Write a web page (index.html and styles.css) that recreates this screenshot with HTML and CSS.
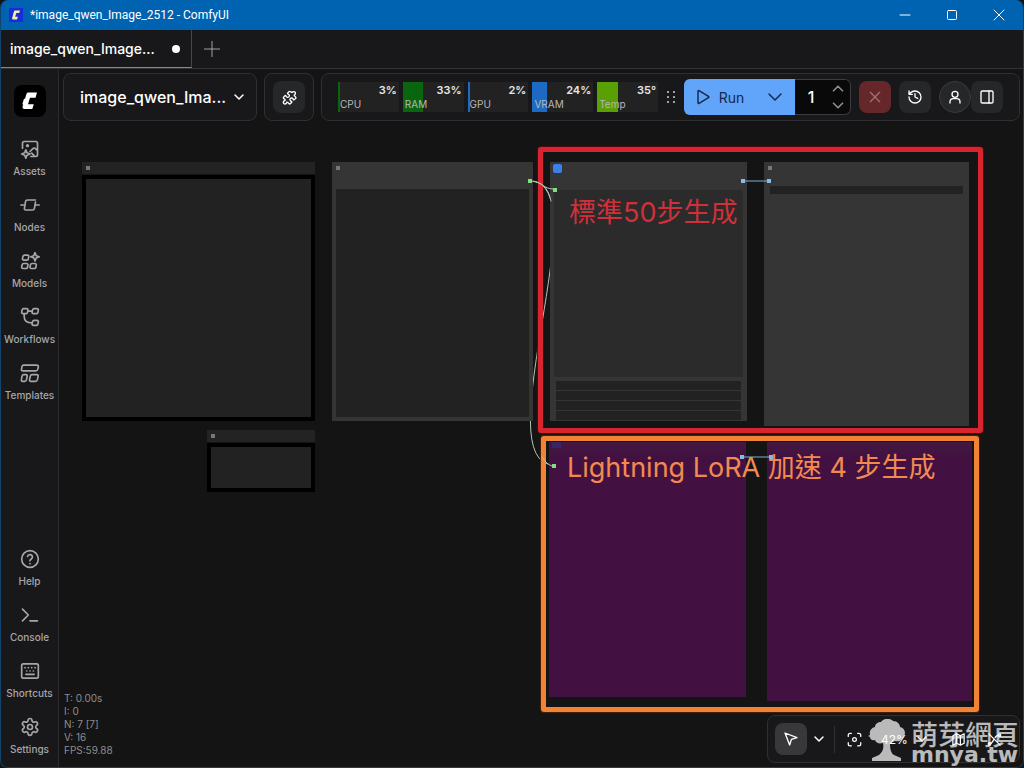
FILE: index.html
```html
<!DOCTYPE html>
<html lang="zh-Hant">

<head>
  <meta charset="UTF-8">
  <meta name="viewport" content="width=device-width, initial-scale=1.0">
  <title>*image_qwen_Image_2512 - ComfyUI</title>
  <link rel="stylesheet" href="styles.css">
</head>

<body>
  <div class="window">
    <header class="titlebar">
      <svg class="app-icon" viewBox="0 0 14 14"><rect width="14" height="14" fill="#1b2bd8"/><path d="M6 2.500h5l-.8 2.500H7.300L6.200 8.800h2.700L8 11.500H4.200C3 11.500 3 10.500 3.300 9.500L4.600 4.500C5 3.200 5.200 2.500 6 2.500z" fill="#eef3a0"/></svg>
      <span class="window-title">*image_qwen_Image_2512 - ComfyUI</span>
      <button class="win-btn" aria-label="Minimize"><svg viewBox="0 0 12 12"><path d="M1 6h10"/></svg></button>
      <button class="win-btn" aria-label="Maximize"><svg viewBox="0 0 12 12"><rect x="1.500" y="1.500" width="9" height="9" rx="1"/></svg></button>
      <button class="win-btn" aria-label="Close"><svg viewBox="0 0 12 12"><path d="M1 1l10 10M11 1L1 11"/></svg></button>
    </header>

    <div class="tabs">
      <button class="tab"><span>image_qwen_Image...</span><i class="dot"></i></button>
      <button class="tab-add" aria-label="New workflow"><svg viewBox="0 0 16 16"><path d="M8 0v16M0 8h16"/></svg></button>
    </div>

    <div class="body">
      <nav class="sidebar">
        <svg class="logo" viewBox="0 0 32 32"><rect width="32" height="32" rx="8" fill="#000"/><path d="M14.500 7.500h8.500l-1.500 5.200h-5.500l-2 6.600h5.800L18.300 24H10.600c-2 0-2.400-1.400-1.900-3l.5-1.700H8.300l1.700-5.600h1l1.300-4.300c.4-1.300 1-1.900 2.200-1.900z" fill="#fff"/></svg>
        <button class="side-item">
          <svg class="icon" viewBox="0 0 24 24"><path d="M3 11V5a2 2 0 0 1 2-2h14a2 2 0 0 1 2 2v14a2 2 0 0 1-2 2h-6M21 14l-2.500-2.500a2 2 0 0 0-3 0L12 15M17 20l-3-3M7 13l1.400 3.600L12 18l-3.600 1.400L7 23l-1.400-3.600L2 18l3.600-1.400z"/><circle cx="9" cy="8" r="1"/></svg>
          <span>Assets</span>
        </button>
        <button class="side-item">
          <svg class="icon" viewBox="0 0 24 24"><path d="M1 12h5M18 12h5M18.500 6H9C7.500 6 6.800 6.700 6.600 8L6 12l-.7 4c-.2 1.300.4 2 1.700 2h8c1.400 0 2.100-.7 2.300-2l.7-4 .6-3.500"/></svg>
          <span>Nodes</span>
        </button>
        <button class="side-item">
          <svg class="icon" viewBox="0 0 24 24"><path d="M5.500 5h3.500a1.500 1.500 0 0 1 1.500 1.800l-.5 2.700A1.800 1.800 0 0 1 8.300 11H4.500A1.500 1.500 0 0 1 3 9.200l.6-2.700A1.900 1.900 0 0 1 5.500 5zM4.500 15H8a1.500 1.500 0 0 1 1.500 1.800L9 19.500A1.800 1.800 0 0 1 7.300 21H3.500A1.500 1.500 0 0 1 2 19.200l.6-2.700A1.900 1.900 0 0 1 4.500 15zM14.500 15H18a1.500 1.500 0 0 1 1.500 1.800l-.5 2.700a1.800 1.800 0 0 1-1.700 1.500h-3.800a1.500 1.500 0 0 1-1.500-1.800l.6-2.700a1.900 1.900 0 0 1 1.900-1.500zM18 2l1.400 3.600L23 7l-3.600 1.400L18 12l-1.400-3.600L13 7l3.600-1.400z"/></svg>
          <span>Models</span>
        </button>
        <button class="side-item">
          <svg class="icon" viewBox="0 0 24 24"><path d="M4.500 2H8a1.500 1.500 0 0 1 1.500 1.800L9 6.500A1.800 1.800 0 0 1 7.300 8H3.500A1.500 1.500 0 0 1 2 6.200l.6-2.700A1.900 1.900 0 0 1 4.500 2zM17 2h3.500A1.500 1.500 0 0 1 22 3.800l-.5 2.700A1.800 1.800 0 0 1 19.800 8H16a1.500 1.500 0 0 1-1.500-1.800l.6-2.700A1.900 1.900 0 0 1 17 2zM17 16h3.500a1.500 1.500 0 0 1 1.500 1.800l-.5 2.700a1.800 1.800 0 0 1-1.700 1.500H16a1.500 1.500 0 0 1-1.500-1.800l.6-2.700A1.900 1.900 0 0 1 17 16zM9.500 5h5M5 8v3c0 5 3 8 9.500 8"/></svg>
          <span>Workflows</span>
        </button>
        <button class="side-item">
          <svg class="icon" viewBox="0 0 24 24"><path d="M4 2.500h16c1.500 0 2.300.8 2 2.200l-.6 2.600c-.3 1.400-1 2.200-2.600 2.200H3.500c-1.400 0-2-.8-1.700-2.200l.5-2.600c.3-1.400.6-2.200 1.700-2.200zM4.500 14H7c1.300 0 1.900.7 1.600 2l-.8 4c-.3 1.300-1 2-2.400 2H3.200c-1.200 0-1.800-.7-1.500-2l.7-4c.3-1.300.9-2 2.100-2zM14.500 14H20c1.400 0 2 .7 1.700 2l-.8 4c-.3 1.300-1 2-2.400 2h-5.400c-1.300 0-1.900-.7-1.600-2l.8-4c.3-1.300.9-2 2.200-2z"/></svg>
          <span>Templates</span>
        </button>
        <button class="side-item first-bottom">
          <svg class="icon" viewBox="0 0 24 24"><circle cx="12" cy="12" r="10"/><path d="M9 9a3 3 0 0 1 5.900 1c0 2-3 2.500-3 4M12 17.500v.1"/></svg>
          <span>Help</span>
        </button>
        <button class="side-item">
          <svg class="icon" viewBox="0 0 24 24"><path d="M3 5l7 7-7 7M12 19h9"/></svg>
          <span>Console</span>
        </button>
        <button class="side-item">
          <svg class="icon" viewBox="0 0 24 24"><rect x="2" y="3.500" width="20" height="17" rx="2"/><path d="M6 8h.1M10 8h.1M14 8h.1M18 8h.1M8 12h.1M12 12h.1M16 12h.1M7 16h10"/></svg>
          <span>Shortcuts</span>
        </button>
        <button class="side-item">
          <svg class="icon" viewBox="0 0 24 24"><path d="M9.700 4.100a2.300 2.300 0 0 1 4.600 0 2.300 2.300 0 0 0 3.300 1.900 2.300 2.300 0 0 1 2.300 4 2.300 2.300 0 0 0 0 3.900 2.300 2.300 0 0 1-2.300 4 2.300 2.300 0 0 0-3.300 1.900 2.300 2.300 0 0 1-4.600 0 2.300 2.300 0 0 0-3.300-1.900 2.300 2.300 0 0 1-2.300-4 2.300 2.300 0 0 0 0-3.900 2.300 2.300 0 0 1 2.300-4 2.300 2.300 0 0 0 3.300-1.900"/><circle cx="12" cy="12" r="3"/></svg>
          <span>Settings</span>
        </button>
      </nav>

      <main class="main">
        <!-- node graph -->
        <div class="graph">
          <svg class="wires" width="940" height="640">
            <path class="wire" d="M470 112C541 112 423 396 494 396"/>
          </svg>
          <div class="node note n-note1"><div class="note-title"><i class="pin"></i></div><div class="note-text"></div></div>
          <div class="node note n-note2"><div class="note-title"><i class="pin"></i></div><div class="note-text"></div></div>
          <div class="node n-links"><i class="pin"></i><div class="preview dark"></div></div>
          <div class="node n-standard">
            <i class="pin blue"></i>
            <div class="preview"></div>
            <div class="widgets"><i></i><i></i><i></i><i></i></div>
          </div>
          <div class="node n-save"><i class="pin"></i><div class="field"></div></div>
          <div class="node purple n-lightning"><i class="pin violet"></i></div>
          <div class="node purple n-save2"></div>
          <div class="frame red"></div>
          <div class="frame orange"></div>
          <svg class="wires" width="940" height="640">
            <path class="wire-blue" d="M683 112h26M682 388h29"/>
            <g fill="#7fe07f"><path d="M468 110h4v4h-4zM493 119h4v4h-4zM492 395h4v4h-4z"/></g>
            <g fill="#8abbe6"><path d="M681 110h4v4h-4zM707 110h4v4h-4zM680 386h4v4h-4zM709 386h4v4h-4z"/></g>
            <path class="wire" d="M472 112C480 112 484 120 493 120M476 113C484 114 489 122 491 132M482 388C486 394 489 396 492 397"/>
          </svg>
          <div class="caption red-text">標準50步生成</div>
          <div class="caption orange-text">Lightning LoRA 加速 4 步生成</div>
        </div>

        <div class="topbar">
          <button class="panel workflow-name"><span>image_qwen_Ima...</span><svg class="chev" viewBox="0 0 12 12"><path d="M2 4l4 4 4-4"/></svg></button>
          <div class="panel ext">
            <button class="tool" aria-label="Extensions"><svg viewBox="0 0 24 24"><path d="M15.400 4.400a1 1 0 0 0 1.700.5 2.500 2.500 0 1 1 3.500 3.500 1 1 0 0 0-.5 1.700l1.700 1.700a1.700 1.700 0 0 1 0 2.400l-1.700 1.700a1 1 0 0 1-1.700-.5 2.500 2.500 0 1 0-3 3 1 1 0 0 1 .5 1.700l-1.700 1.700a1.700 1.700 0 0 1-2.400 0l-1.700-1.700a1 1 0 0 0-1.700.5 2.500 2.500 0 1 1-3-3 1 1 0 0 0 .5-1.700l-1.700-1.700a1.700 1.700 0 0 1 0-2.400l1.700-1.700a1 1 0 0 1 1.700.5 2.500 2.500 0 1 0 3-3 1 1 0 0 1-.5-1.700l1.700-1.700a1.700 1.700 0 0 1 2.400 0z"/></svg></button>
          </div>
          <div class="panel actions">
            <div class="meters">
              <div class="meter"><i class="fill green" style="width: 3%"></i><b>3%</b><span>CPU</span></div>
              <div class="meter"><i class="fill green" style="width: 33%"></i><b>33%</b><span>RAM</span></div>
              <div class="meter"><i class="fill blue" style="width: 2%"></i><b>2%</b><span>GPU</span></div>
              <div class="meter"><i class="fill blue" style="width: 24%"></i><b>24%</b><span>VRAM</span></div>
              <div class="meter"><i class="fill lime" style="width: 35%"></i><b>35°</b><span>Temp</span></div>
            </div>
            <svg class="grip" viewBox="0 0 10 14"><path d="M1 1h2v2H1zM7 1h2v2H7zM1 6h2v2H1zM7 6h2v2H7zM1 11h2v2H1zM7 11h2v2H7z"/></svg>
            <div class="run-group">
              <button class="run"><svg viewBox="0 0 16 16"><path d="M3 2.200v11.600c0 .6.500.9 1 .6l9.500-5.700c.5-.3.500-1 0-1.300L4 1.600c-.5-.3-1 0-1 .6z"/></svg>Run</button>
              <button class="run-more" aria-label="Run options"><svg viewBox="0 0 16 16"><path d="M2 5l6 6 6-6"/></svg></button>
              <input class="count" type="text" value="1" aria-label="Batch count">
              <div class="stepper">
                <button aria-label="Increase"><svg viewBox="0 0 12 8"><path d="M2 6l4-4 4 4"/></svg></button>
                <button aria-label="Decrease"><svg viewBox="0 0 12 8"><path d="M2 2l4 4 4-4"/></svg></button>
              </div>
            </div>
            <button class="tool stop" aria-label="Cancel"><svg viewBox="0 0 24 24"><path d="M5 5l14 14M19 5L5 19"/></svg></button>
            <button class="tool" aria-label="History"><svg viewBox="0 0 24 24"><path d="M3 12a9 9 0 1 0 9-9 9.700 9.700 0 0 0-6.700 2.700L3 8M3 3v5h5M12 7v5l4 2"/></svg></button>
            <div class="pair">
              <button class="tool round" aria-label="Account"><svg viewBox="0 0 24 24"><circle cx="12" cy="8" r="4.500"/><path d="M4.500 21v-1.500a5 5 0 0 1 5-5h5a5 5 0 0 1 5 5V21"/></svg></button>
              <button class="tool" aria-label="Side panel"><svg viewBox="0 0 24 24"><rect x="3" y="3" width="18" height="18" rx="2"/><path d="M15 3v18"/></svg></button>
            </div>
          </div>
        </div>

        <div class="bottombar">
          <div class="stats">T: 0.00s<br>I: 0<br>N: 7 [7]<br>V: 16<br>FPS:59.88</div>
          <div class="panel view-tools">
            <button class="tool select" aria-label="Select"><svg viewBox="0 0 24 24"><path d="M3 3l7 18 2.600-8.400L21 10z"/></svg></button>
            <button class="bare" aria-label="Modes"><svg class="chev" viewBox="0 0 12 12"><path d="M2 4l4 4 4-4"/></svg></button>
            <i class="divider"></i>
            <button class="bare" aria-label="Fit view"><svg viewBox="0 0 24 24"><path d="M2 7V5a3 3 0 0 1 3-3h2M17 2h2a3 3 0 0 1 3 3v2M22 17v2a3 3 0 0 1-3 3h-2M7 22H5a3 3 0 0 1-3-3v-2"/><circle cx="12" cy="12" r="3"/></svg></button>
            <button class="bare zoom">42% <svg class="chev" viewBox="0 0 12 12"><path d="M2 4l4 4 4-4"/></svg></button>
            <button class="bare" aria-label="Minimap"><svg viewBox="0 0 24 24"><path d="M3 6l6-3 6 3 6-3v15l-6 3-6-3-6 3zM9 3v15M15 6v15"/></svg></button>
            <button class="bare links" aria-label="Hide links"><svg viewBox="0 0 24 24"><path d="M3 3l18 18M4 19c4 0 5-4 7-7M13 9c2-4 4-4 7-4"/><circle cx="4" cy="19" r="2"/><circle cx="20" cy="5" r="2"/></svg></button>
            <div class="watermark">
              <svg viewBox="0 0 38 42"><path d="M13 3c3-4 9-4 12-1 4 0 7 3 7 6 5 1 6 6 4 9-1 4-5 6-9 5l-5 2c0 6 1 10 4 12l7 3v3H4v-3l7-3c4-3 5-7 4-12-4 1-7 0-8-3-3 1-5-1-5-3l-2-1 2-1c-1-4 1-7 5-8 0-3 3-5 6-5z"/></svg>
              <div><div class="wm-name">萌芽網頁</div><div class="wm-url">mnya.tw</div></div>
            </div>
          </div>
        </div>
      </main>
    </div>
  </div>
</body>

</html>
```
FILE: styles.css
```css
* {
  box-sizing: border-box;
}

body {
  margin: 0;
  background: #141414;
  color: #fff;
  font-family: Inter, "Noto Sans CJK TC", sans-serif;
  font-size: 14px;
}

button {
  display: flex;
  align-items: center;
  justify-content: center;
  padding: 0;
  border: 0;
  background: none;
  color: inherit;
  font: inherit;
}

svg {
  flex: none;
  fill: none;
  stroke: currentColor;
  stroke-width: 2;
  stroke-linecap: round;
  stroke-linejoin: round;
}

.window {
  display: flex;
  flex-direction: column;
  height: 100vh;
  border: 1px solid #12456b;
  border-top: 0;
  border-radius: 8px;
  overflow: hidden;
}

/* title bar */
.titlebar {
  display: flex;
  align-items: center;
  height: 30px;
  flex: none;
  padding: 0 2px 0 9px;
  margin: 0 -1px;
  background: #0063b1;
}

.app-icon {
  width: 14px;
  height: 14px;
  stroke: none;
}

.window-title {
  flex: 1;
  margin-left: 7px;
  font-family: Roboto, sans-serif;
  font-size: 12px;
  line-height: 16px;
}

.win-btn {
  width: 47px;
  height: 30px;
}

.win-btn svg {
  width: 12px;
  height: 12px;
  stroke-width: 1;
}

/* workflow tabs */
.tabs {
  display: flex;
  flex: none;
  height: 39px;
  background: #18181a;
  border-bottom: 1px solid #333336;
}

.tab {
  width: 191px;
  padding: 0 11px 0 9px;
  justify-content: space-between;
  font-weight: 500;
  border-right: 1px solid #44444a;
  border-bottom: 1px solid #5a8fd0;
}

.dot {
  width: 8px;
  height: 8px;
  border-radius: 50%;
  background: #fff;
}

.tab-add {
  width: 40px;
  color: #a0a0a6;
}

.tab-add svg {
  width: 16px;
  height: 16px;
  stroke-width: 1;
}

.body {
  display: flex;
  flex: 1;
  min-height: 0;
}

/* sidebar */
.sidebar {
  display: flex;
  flex-direction: column;
  align-items: center;
  flex: none;
  width: 58px;
  padding: 16px 0 3px;
  background: #18181a;
  border-right: 1px solid #2c2c2f;
}

.logo {
  width: 32px;
  height: 32px;
  margin-bottom: 13px;
  stroke: none;
}

.side-item {
  flex-direction: column;
  gap: 5px;
  width: 100%;
  height: 56px;
  color: #a6a6aa;
  font-size: 10px;
  font-weight: 500;
  line-height: 14px;
}

.first-bottom {
  margin-top: auto;
}

.icon {
  width: 20px;
  height: 20px;
}

.main {
  position: relative;
  display: flex;
  flex-direction: column;
  justify-content: space-between;
  flex: 1;
  min-width: 0;
  padding: 4px 3px 4px 4px;
}

/* graph */
.graph {
  position: absolute;
  inset: 0 0 0 1px;
  overflow: hidden;
  background: #141414;
}

.wires {
  position: absolute;
  left: 0;
  top: 0;
  stroke: none;
}

.wire {
  stroke: #b4c4b4;
  stroke-width: 1;
}

.wire-blue {
  stroke: #7faed6;
  stroke-width: 1;
}

.node {
  position: absolute;
  display: flex;
  flex-direction: column;
  background: #353535;
}

.pin {
  flex: none;
  width: 4px;
  height: 4px;
  margin: 4px;
  background: #777;
}

.pin.blue {
  width: 9px;
  height: 9px;
  margin: 2px 3px;
  border-radius: 2px;
  background: #3b7fe8;
}

.pin.violet {
  width: 9px;
  height: 6px;
  margin: 0 3px;
  background: #3b2466;
}

.note {
  gap: 1px;
  background: none;
}

.note-title {
  display: flex;
  height: 12px;
  background: #232323;
}

.note-text {
  flex: 1;
  border: 4px solid #000;
  background: #222;
}

.n-note1 {
  left: 22px;
  top: 93px;
  width: 233px;
  height: 259px;
}

.n-note2 {
  left: 147px;
  top: 361px;
  width: 108px;
  height: 62px;
}

.n-links {
  left: 272px;
  top: 93px;
  width: 201px;
  height: 259px;
}

.preview {
  flex: 1;
  margin: 15px 4px 4px;
  background: #2b2b2b;
}

.preview.dark {
  background: #222;
}

.n-standard {
  left: 490px;
  top: 93px;
  width: 197px;
  height: 259px;
}

.widgets {
  display: flex;
  flex-direction: column;
  gap: 1px;
  margin: 0 6px 1px;
}

.widgets i {
  height: 9px;
  background: #222;
}

.n-save {
  left: 704px;
  top: 93px;
  width: 205px;
  height: 264px;
}

.field {
  height: 8px;
  margin: 12px 6px;
  background: #222;
}

.purple {
  background: linear-gradient(#43193f, #421142 14px);
}

.n-lightning {
  left: 489px;
  top: 373px;
  width: 197px;
  height: 255px;
}

.n-save2 {
  left: 707px;
  top: 373px;
  width: 205px;
  height: 259px;
}

.frame {
  position: absolute;
  border: 5px solid;
  border-radius: 3px;
}

.frame.red {
  left: 478px;
  top: 78px;
  width: 445px;
  height: 286px;
  border-color: #d8242e;
  box-shadow: 0 0 1px 1px #500a10;
}

.frame.orange {
  left: 481px;
  top: 367px;
  width: 438px;
  height: 276px;
  border-color: #f08336;
  box-shadow: 0 0 1px 1px #4a2008;
}

.caption {
  position: absolute;
  font-family: Inter, "Noto Sans CJK TC", sans-serif;
  font-size: 27px;
  font-weight: 400;
  line-height: 36px;
  white-space: nowrap;
}

.red-text {
  left: 509px;
  top: 126px;
  color: #d0303a;
}

.orange-text {
  left: 507px;
  top: 381px;
  color: #f28a50;
}

/* floating toolbars */
.topbar,
.bottombar {
  position: relative;
  display: flex;
  gap: 7px;
}

.bottombar {
  align-items: flex-end;
  justify-content: space-between;
}

.panel {
  display: flex;
  align-items: center;
  height: 48px;
  background: #18181a;
  border: 1px solid #303033;
  border-radius: 8px;
}

.workflow-name {
  width: 194px;
  padding: 0 11px 0 16px;
  justify-content: space-between;
  font-size: 16px;
  font-weight: 500;
}

.chev {
  width: 12px;
  height: 12px;
  stroke-width: 1.5;
}

.ext {
  width: 50px;
  justify-content: center;
}

.tool {
  width: 32px;
  height: 32px;
  border-radius: 8px;
  background: #262729;
}

.tool svg {
  width: 16px;
  height: 16px;
}

.actions {
  flex: 1;
  gap: 8px;
  padding: 0 16px;
}

.meters {
  display: flex;
  flex: 1;
  gap: 4px;
}

.meter {
  position: relative;
  display: flex;
  flex-direction: column;
  justify-content: space-between;
  flex: 1;
  height: 30px;
  padding: 1px 2px;
  background: #222223;
  font-size: 11px;
  line-height: 14px;
}

.meter b {
  position: relative;
  text-align: right;
  font-weight: 600;
  color: #e6e6e6;
}

.meter span {
  position: relative;
  font-size: 10px;
  color: #b8b8b8;
}

.fill {
  position: absolute;
  left: 0;
  top: 0;
  height: 100%;
  min-width: 2px;
}

.fill.green {
  background: #0a650f;
}

.fill.blue {
  background: #1c6ac4;
}

.fill.lime {
  background: #58a004;
}

.grip {
  width: 10px;
  height: 14px;
  fill: #a0a0a4;
  stroke: none;
}

.run-group {
  display: flex;
  height: 36px;
  width: 167px;
  border-radius: 6px;
  overflow: hidden;
  background: #09090a;
  box-shadow: inset 0 0 0 1px #3c3c40;
}

.run {
  width: 71px;
  gap: 8px;
  background: #60a5fa;
  color: #16294d;
}

.run svg {
  width: 16px;
  height: 16px;
  stroke-width: 1.5;
}

.run-more {
  width: 40px;
  background: #60a5fa;
  color: #16294d;
}

.run-more svg {
  width: 16px;
  height: 16px;
  stroke-width: 1.5;
}

.count {
  width: 32px;
  padding: 0;
  border: 0;
  background: none;
  color: #fff;
  font: 500 16px Inter, sans-serif;
  text-align: center;
}

.stepper {
  display: flex;
  flex-direction: column;
  justify-content: center;
  gap: 8px;
  width: 22px;
  color: #8c8c90;
}

.stepper svg {
  width: 14px;
  height: 9px;
  stroke-width: 1.5;
}

.stop {
  background: #652729;
  color: #a07072;
}

.pair {
  display: flex;
}

.round {
  border: 1px solid #3a3b3e;
  border-radius: 50%;
}

.stats {
  padding-bottom: 6px;
  margin-left: 1px;
  font-size: 10px;
  line-height: 13px;
  color: #8e8e8e;
}

.view-tools {
  position: relative;
  gap: 6px;
  width: 253px;
  padding: 0 7px;
}

.select {
  background: #38383b;
}

.bare svg {
  width: 15px;
  height: 15px;
}

.bare .chev {
  width: 12px;
  height: 12px;
}

.divider {
  width: 1px;
  height: 27px;
  margin: 0 6px 0 3px;
  background: #303033;
}

.zoom {
  gap: 8px;
  margin: 0 17px 0 13px;
  font-size: 12px;
}

.links {
  margin-left: 15px;
}

/* site mark laid over the view tools */
.watermark {
  position: absolute;
  right: 0;
  bottom: -1px;
  display: flex;
  align-items: center;
  gap: 5px;
  opacity: 0.7;
}

.watermark svg {
  width: 38px;
  height: 42px;
  fill: currentColor;
  stroke: none;
}

.wm-name {
  padding-top: 4px;
  font-family: "Noto Sans CJK TC", sans-serif;
  font-size: 27px;
  font-weight: 500;
  line-height: 27px;
}

.wm-url {
  font-family: "DejaVu Sans", sans-serif;
  font-size: 22px;
  font-weight: bold;
  line-height: 16px;
}
```
